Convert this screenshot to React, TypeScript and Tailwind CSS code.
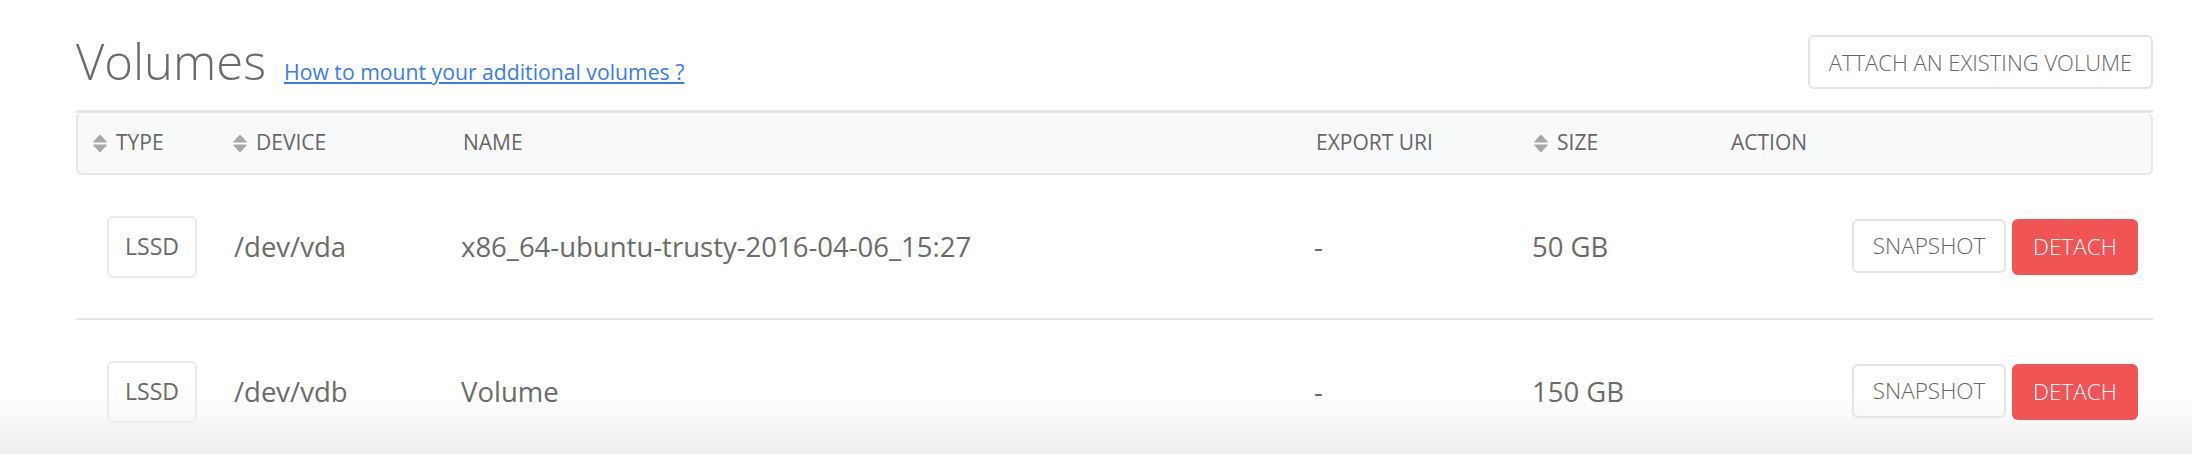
import React from 'react';

type Volume = {
  type: string;
  device: string;
  name: string;
  exportUri: string;
  size: string;
};

const volumes: Volume[] = [
  { type: 'LSSD', device: '/dev/vda', name: 'x86_64-ubuntu-trusty-2016-04-06_15:27', exportUri: '-', size: '50 GB' },
  { type: 'LSSD', device: '/dev/vdb', name: 'Volume', exportUri: '-', size: '150 GB' },
];

const cols = 'grid grid-cols-[140px_230px_853px_218px_197px_1fr] px-[15px]';

const SortIcon = () => (
  <svg width="14" height="19" viewBox="0 0 14 19" className="shrink-0">
    <path d="M0.5 8 L7 1 L13.5 8 Z" fill="#a8a8a8" strokeLinejoin="round" stroke="#a8a8a8" strokeWidth="1" />
    <path d="M0.5 11 L13.5 11 L7 18 Z" fill="#a8a8a8" strokeLinejoin="round" stroke="#a8a8a8" strokeWidth="1" />
  </svg>
);

const HeaderCell = ({ label, sortable }: { label: string; sortable?: boolean }) => (
  <div className="flex items-center gap-[9px]">
    {sortable && <SortIcon />}
    <span>{label}</span>
  </div>
);

const App = () => {
  return (
    <div
      className="h-[454px] overflow-hidden bg-linear-to-b from-white from-[87%] to-[#eeeeee] pl-[76px] pr-[39px] pt-[35px] text-[#6b6b6b]"
      style={{ fontFamily: '"Open Sans", "Noto Sans", sans-serif' }}
    >
      {/* title row */}
      <div className="flex h-[54px] items-center justify-between">
        <div className="flex items-baseline">
          <h1 className="text-[49px] font-light leading-none text-[#6b6b6b]">Volumes</h1>
          <a href="#" className="ml-[18px] text-[21.2px] text-[#3b7cf2] underline underline-offset-2">
            How to mount your additional volumes ?
          </a>
        </div>
        <button className="h-[54px] w-[345px] rounded-md border-2 border-[#e4e4e4] text-[22px] font-light text-[#666]">
          ATTACH AN EXISTING VOLUME
        </button>
      </div>

      {/* table */}
      <div className="mt-[21px] border-t-[3px] border-[#e6e6e6]">
        <div className={`${cols} h-[62px] items-center rounded-md border-2 border-t-0 border-[#e4e6ea] bg-[#f8f9fb] text-[21px] text-[#666]`}>
          <HeaderCell label="TYPE" sortable />
          <HeaderCell label="DEVICE" sortable />
          <HeaderCell label="NAME" />
          <HeaderCell label="EXPORT URI" />
          <HeaderCell label="SIZE" sortable />
          <HeaderCell label="ACTION" />
        </div>

        {volumes.map((v) => (
          <div key={v.device} className={`${cols} h-[145px] items-center border-b-2 border-[#e6e6e6] text-[27.5px]`}>
            <div className="pl-4">
              <span className="flex h-[62px] w-[90px] items-center justify-center rounded-md border-2 border-[#e8ebef] text-[23px]">
                {v.type}
              </span>
            </div>
            <div className="pl-[3px]">{v.device}</div>
            <div>{v.name}</div>
            <div>{v.exportUri}</div>
            <div>{v.size}</div>
            <div className="flex justify-end gap-[6px]">
              <button className="h-[54px] w-[154px] rounded-md border-2 border-[#e4e4e4] text-[22.5px] font-light text-[#666]">
                SNAPSHOT
              </button>
              <button className="h-[56px] w-[126px] rounded-md bg-[#f05454] text-[22.5px] font-light text-white">
                DETACH
              </button>
            </div>
          </div>
        ))}
      </div>
    </div>
  );
};

export default App;
